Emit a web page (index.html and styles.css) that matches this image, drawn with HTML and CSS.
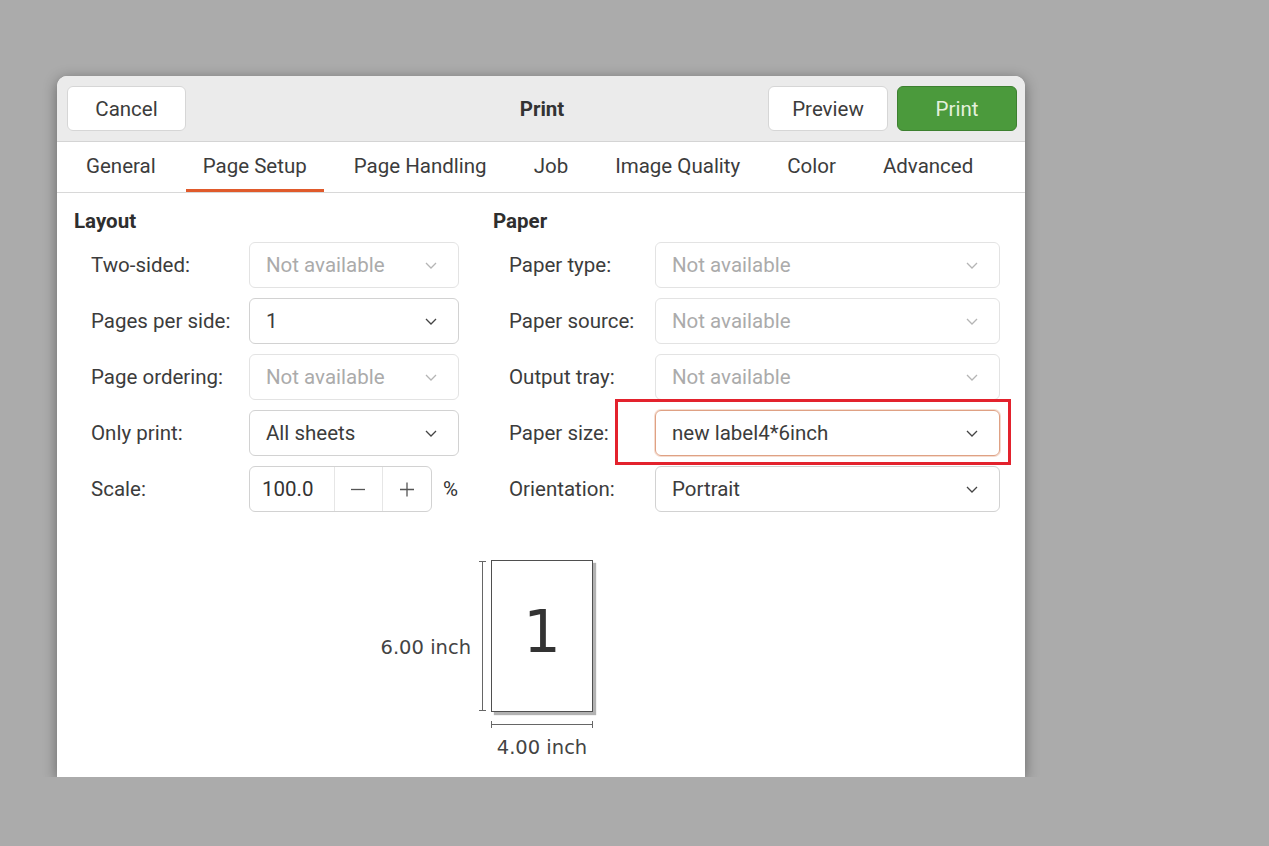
FILE: index.html
```html
<!DOCTYPE html>
<html lang="en">
<head>
    <meta charset="UTF-8">
    <meta name="viewport" content="width=device-width, initial-scale=1.0">
    <title>Print</title>

    <link rel="stylesheet" href="styles.css">

</head>
<body>
    <div class="dialog">
        <div class="header">
            <div class="header-left">
                <button class="btn">Cancel</button>
            </div>
            <div class="title">Print</div>
            <div class="header-right">
                <button class="btn">Preview</button>
                <button class="btn btn-print">Print</button>
            </div>
        </div>

        <div class="tabs">
            <div class="tab">General</div>
            <div class="tab active">Page Setup</div>
            <div class="tab">Page Handling</div>
            <div class="tab">Job</div>
            <div class="tab">Image Quality</div>
            <div class="tab">Color</div>
            <div class="tab">Advanced</div>
        </div>

        <div class="content">
            <div class="sections">
                <!-- coluna da esquerda -->
                <div class="section section-layout">
                    <h3>Layout</h3>
                    <div class="rows">
                        <div class="row">
                            <span class="label">Two-sided:</span>
                            <div class="combo disabled">
                                <span>Not available</span>
                                <svg class="chev" width="12" height="7" viewBox="0 0 12 7"><path d="M1 1 L6 6 L11 1" fill="none" stroke="currentColor" stroke-width="1.3"/></svg>
                            </div>
                        </div>
                        <div class="row">
                            <span class="label">Pages per side:</span>
                            <div class="combo">
                                <span>1</span>
                                <svg class="chev" width="12" height="7" viewBox="0 0 12 7"><path d="M1 1 L6 6 L11 1" fill="none" stroke="currentColor" stroke-width="1.3"/></svg>
                            </div>
                        </div>
                        <div class="row">
                            <span class="label">Page ordering:</span>
                            <div class="combo disabled">
                                <span>Not available</span>
                                <svg class="chev" width="12" height="7" viewBox="0 0 12 7"><path d="M1 1 L6 6 L11 1" fill="none" stroke="currentColor" stroke-width="1.3"/></svg>
                            </div>
                        </div>
                        <div class="row">
                            <span class="label">Only print:</span>
                            <div class="combo">
                                <span>All sheets</span>
                                <svg class="chev" width="12" height="7" viewBox="0 0 12 7"><path d="M1 1 L6 6 L11 1" fill="none" stroke="currentColor" stroke-width="1.3"/></svg>
                            </div>
                        </div>
                        <div class="row">
                            <span class="label">Scale:</span>
                            <div class="scale">
                                <div class="spin">
                                    <span class="spin-value">100.0</span>
                                    <span class="spin-btn">
                                        <svg width="16" height="16" viewBox="0 0 16 16"><path d="M1 8.5 H15" stroke="currentColor" stroke-width="1.3"/></svg>
                                    </span>
                                    <span class="spin-btn">
                                        <svg width="16" height="16" viewBox="0 0 16 16"><path d="M1 8.5 H15 M8 1.5 V15.5" stroke="currentColor" stroke-width="1.3"/></svg>
                                    </span>
                                </div>
                                <span class="percent">%</span>
                            </div>
                        </div>
                    </div>
                </div>

                <!-- coluna da direita -->
                <div class="section section-paper">
                    <h3>Paper</h3>
                    <div class="rows">
                        <div class="row">
                            <span class="label">Paper type:</span>
                            <div class="combo disabled">
                                <span>Not available</span>
                                <svg class="chev" width="12" height="7" viewBox="0 0 12 7"><path d="M1 1 L6 6 L11 1" fill="none" stroke="currentColor" stroke-width="1.3"/></svg>
                            </div>
                        </div>
                        <div class="row">
                            <span class="label">Paper source:</span>
                            <div class="combo disabled">
                                <span>Not available</span>
                                <svg class="chev" width="12" height="7" viewBox="0 0 12 7"><path d="M1 1 L6 6 L11 1" fill="none" stroke="currentColor" stroke-width="1.3"/></svg>
                            </div>
                        </div>
                        <div class="row">
                            <span class="label">Output tray:</span>
                            <div class="combo disabled">
                                <span>Not available</span>
                                <svg class="chev" width="12" height="7" viewBox="0 0 12 7"><path d="M1 1 L6 6 L11 1" fill="none" stroke="currentColor" stroke-width="1.3"/></svg>
                            </div>
                        </div>
                        <div class="row">
                            <span class="label">Paper size:</span>
                            <div class="combo focused">
                                <span>new label4*6inch</span>
                                <svg class="chev" width="12" height="7" viewBox="0 0 12 7"><path d="M1 1 L6 6 L11 1" fill="none" stroke="currentColor" stroke-width="1.3"/></svg>
                                <span class="mark"></span>
                            </div>
                        </div>
                        <div class="row">
                            <span class="label">Orientation:</span>
                            <div class="combo">
                                <span>Portrait</span>
                                <svg class="chev" width="12" height="7" viewBox="0 0 12 7"><path d="M1 1 L6 6 L11 1" fill="none" stroke="currentColor" stroke-width="1.3"/></svg>
                            </div>
                        </div>
                    </div>
                </div>
            </div>

            <!-- previa da pagina -->
            <div class="preview">
                <span class="dim dim-height">6.00 inch</span>
                <svg class="ruler-v" width="20" height="152" viewBox="0 0 20 152">
                    <path d="M11.5 1 V151 M8 1.5 H15 M8 150.5 H15" fill="none" stroke="#666" stroke-width="1"/>
                </svg>
                <div class="page">1</div>
                <svg class="ruler-h" width="102" height="25" viewBox="0 0 102 25">
                    <path d="M1 12.5 H101 M0.5 9 V16 M101.5 9 V16" fill="none" stroke="#666" stroke-width="1"/>
                </svg>
                <span class="dim dim-width">4.00 inch</span>
            </div>
        </div>
    </div>
</body>
</html>
```

FILE: styles.css
```css
*{
    margin: 0;
    padding: 0;
    box-sizing: border-box;
}

body{
    background-color: #ababab;
    padding: 76px 0 0 57px;
    font-family: Roboto, "Noto Sans", sans-serif;
    font-size: 20.5px;
    color: #3c3c3c;
}

.dialog{
    width: 968px;
    height: 701px;
    background-color: #fff;
    border-radius: 10px 10px 0 0;
    box-shadow: 0 3px 14px rgba(0, 0, 0, 0.4);
    overflow: hidden;
}

/* cabecalho */
.header{
    display: grid;
    grid-template-columns: 1fr auto 1fr;
    align-items: center;
    height: 66px;
    padding: 0 8px 0 10px;
    background-color: #ebebeb;
    border-bottom: 1px solid #d4d4d4;
}

.header-right{
    display: flex;
    justify-content: flex-end;
    gap: 9px;
}

.title{
    font-weight: bold;
    color: #333;
}

.btn{
    height: 45px;
    width: 119px;
    font-family: inherit;
    font-size: 20.5px;
    color: #3c3c3c;
    background-color: #fff;
    border: 1px solid #d6d6d6;
    border-radius: 6px;
}

.header-right .btn{
    width: 120px;
}

.btn-print{
    background-color: #4b9a3c;
    border-color: #3d8030;
    color: #e4f1dd;
}

/* abas */
.tabs{
    display: flex;
    gap: 13px;
    height: 51px;
    padding-left: 12px;
    border-bottom: 1px solid #d8d8d8;
}

.tab{
    display: flex;
    align-items: center;
    padding: 0 17px;
    border-bottom: 3px solid transparent;
    color: #3c3c3c;
}

.tab.active{
    border-bottom-color: #e05a2b;
}

/* conteudo */
.content{
    padding: 17px 25px 0 17px;
}

.sections{
    display: grid;
    grid-template-columns: 385px 1fr;
    gap: 34px;
}

h3{
    font-size: 20.5px;
    font-weight: bold;
    line-height: 22px;
    color: #2e2e2e;
}

.rows{
    display: flex;
    flex-direction: column;
    gap: 10px;
    margin-top: 10px;
}

.row{
    display: grid;
    align-items: center;
    height: 46px;
}

.section-layout .row{
    grid-template-columns: 158px 210px;
    padding-left: 17px;
}

.section-paper .row{
    grid-template-columns: 146px 1fr;
    padding-left: 16px;
}

.combo{
    position: relative;
    display: flex;
    align-items: center;
    justify-content: space-between;
    height: 46px;
    padding: 0 21px 0 16px;
    border: 1px solid #d2d2d2;
    border-radius: 6px;
    color: #3c3c3c;
}

.combo.disabled{
    border-color: #e3e3e3;
    color: #ababab;
}

.combo.focused{
    border-color: #dfa184;
    box-shadow: 0 0 0 1px #f5dccf;
}

.chev{
    color: #444;
}

.combo.disabled .chev{
    color: #b5b5b5;
}

/* marcacao vermelha por cima */
.mark{
    position: absolute;
    top: -12px;
    bottom: -10px;
    left: -41px;
    right: -12px;
    border: 3px solid #e3222d;
}

.scale{
    display: flex;
    align-items: center;
}

.spin{
    display: flex;
    height: 46px;
    width: 183px;
    border: 1px solid #d2d2d2;
    border-radius: 6px;
}

.spin-value{
    display: flex;
    align-items: center;
    width: 84px;
    padding-left: 12px;
    color: #333;
}

.spin-btn{
    display: flex;
    align-items: center;
    justify-content: center;
    width: 49px;
    border-left: 1px solid #e6e6e6;
    color: #555;
}

.percent{
    margin-left: 11px;
    color: #333;
}

/* previa */
.preview{
    display: grid;
    grid-template-columns: 100px 20px 102px;
    grid-template-rows: 152px 25px auto;
    margin: 48px 0 0 297px;
    width: 230px;
}

.dim{
    font-family: "DejaVu Sans", sans-serif;
    font-size: 19.5px;
    color: #444;
}

.dim-height{
    align-self: center;
    justify-self: end;
    white-space: nowrap;
    margin-top: 22px;
}

.ruler-v{
    display: block;
}

.page{
    display: flex;
    align-items: center;
    justify-content: center;
    padding-bottom: 10px;
    border: 1px solid #4f4f4f;
    box-shadow: 3px 3px 1px rgba(0, 0, 0, 0.3);
    font-family: "DejaVu Sans", sans-serif;
    font-size: 59px;
    color: #333;
}

.ruler-h{
    display: block;
    grid-column: 3;
}

.dim-width{
    grid-column: 3;
    justify-self: center;
    white-space: nowrap;
    line-height: 22px;
}
```
